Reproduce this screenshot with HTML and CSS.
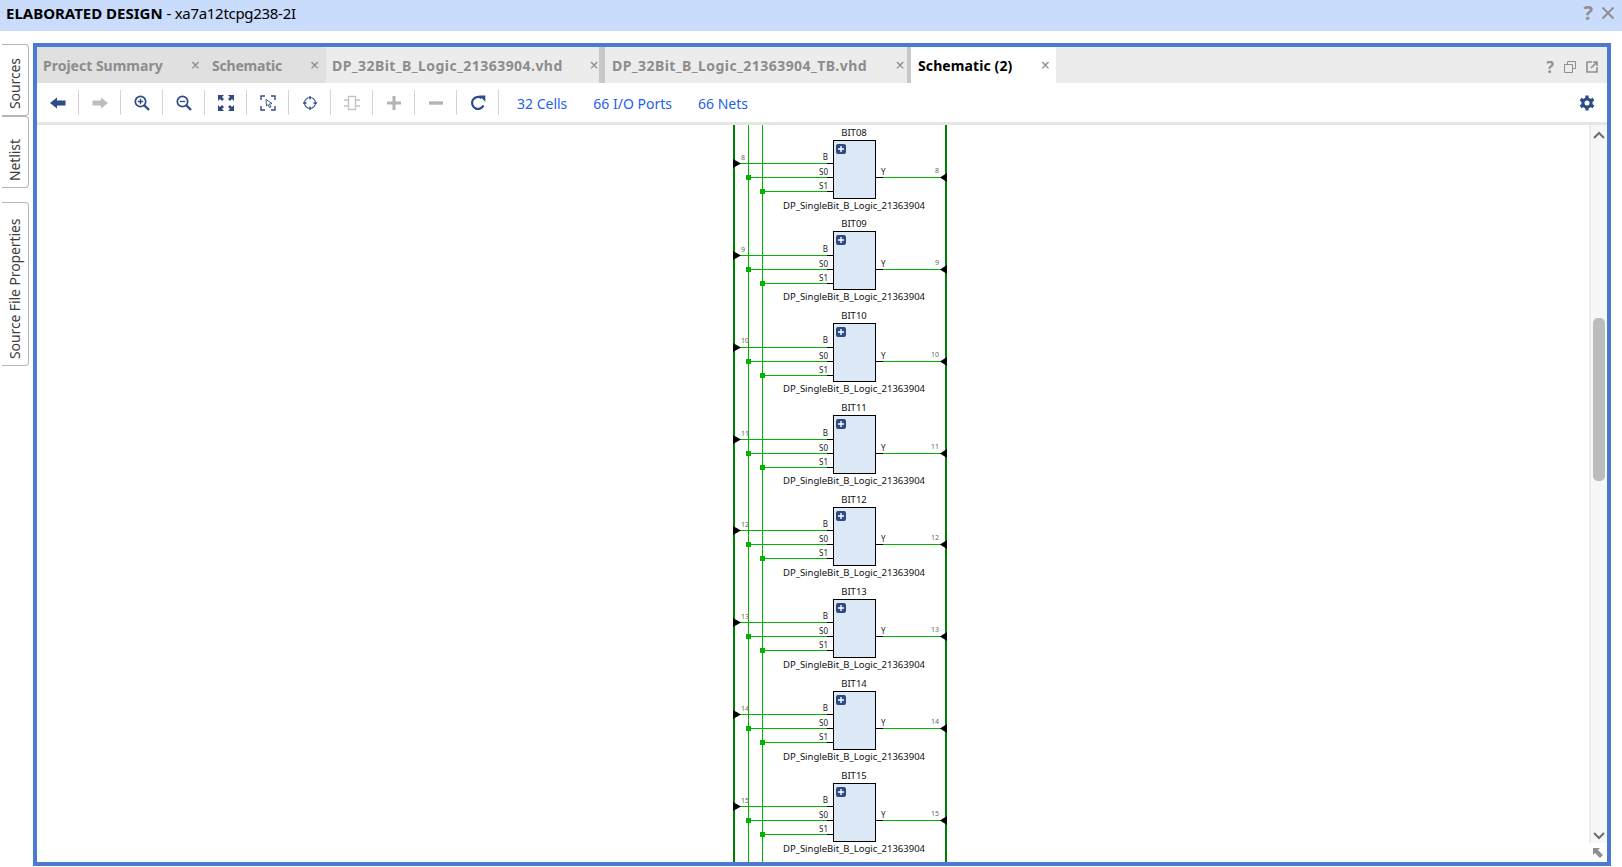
FILE: index.html
```html
<!DOCTYPE html>
<html lang="en">
<head>
<meta charset="utf-8">
<title>Elaborated Design</title>
<link rel="stylesheet" href="styles.css">
</head>
<body>
<svg class="defs" width="0" height="0" aria-hidden="true">
  <defs>
    <g id="cell">
      <rect x="1.5" y="1.5" width="42" height="58" fill="#dde8f7" stroke="#000" stroke-width="1"/>
      <rect x="4" y="5" width="10" height="10" rx="2" fill="#2f4b86"/>
      <path d="M9 7v6M6 10h6" stroke="#fff" stroke-width="1.4"/>
    </g>
    <g id="wires">
      <path d="M738 24.5H827M748 38.5H827M762 52.5H827M883 38.5H942" stroke="#00b400" stroke-width="1" fill="none"/>
      <path d="M827 24.5H841M827 38.5H841M827 52.5H841M868 38.5H883" stroke="#000" stroke-width="1" fill="none"/>
      <rect x="746" y="36" width="5" height="5" fill="#00b400"/>
      <rect x="760" y="50" width="5" height="5" fill="#00b400"/>
      <path d="M733 20l8 4.5-8 4.5z" fill="#000"/>
      <path d="M947 34l-7 4.5 7 4.5z" fill="#000"/>
    </g>
  </defs>
</svg>
<header class="titlebar">
  <div class="title"><b>ELABORATED DESIGN</b> <span class="part">- xa7a12tcpg238-2I</span></div>
  <div class="title-actions">
    <span class="title-q">?</span>
    <svg width="14" height="14" viewBox="0 0 14 14"><path d="M1.5 1.5l11 11M12.5 1.5l-11 11" stroke="#8f8f8f" stroke-width="1.8"/></svg>
  </div>
</header>
<div class="workspace">
  <nav class="sidetabs">
    <div class="sidetab tab-sources">Sources</div>
    <div class="sidetab tab-netlist">Netlist</div>
    <div class="sidetab tab-props">Source File Properties</div>
  </nav>
  <main class="panel">
    <div class="tabbar">
      <div class="tab dim t1"><span>Project Summary</span><i>×</i></div>
      <div class="tab dim t2"><span>Schematic</span><i>×</i></div>
      <div class="tab t3"><span>DP_32Bit_B_Logic_21363904.vhd</span><i>×</i></div>
      <div class="tab t4"><span>DP_32Bit_B_Logic_21363904_TB.vhd</span><i>×</i></div>
      <div class="tab active t5"><span>Schematic (2)</span><i>×</i></div>
      <div class="tab-actions">
        <span class="tab-q">?</span>
        <svg width="12" height="12" viewBox="0 0 12 12"><path d="M3.5 3.5V.5h8v7h-3M.5 3.5h8v8h-8z" fill="none" stroke="#8f8f8f"/></svg>
        <svg width="12" height="12" viewBox="0 0 12 12"><path d="M6 1H1v10h10V6" fill="none" stroke="#8f8f8f" stroke-width="1.6"/><path d="M5 7l5-5M7 1h4v4" fill="none" stroke="#8f8f8f" stroke-width="1.6"/></svg>
      </div>
    </div>
    <div class="toolbar">
      <button class="tool"><svg width="16" height="12" viewBox="0 0 16 12"><path d="M0 6l7-5.5V3.500h8.500v5H7v3z" fill="#2f4b86"/></svg></button>
      <button class="tool"><svg width="16" height="12" viewBox="0 0 16 12"><path d="M16 6L9 .5V3.500H.5v5H9v3z" fill="#bdbdbd"/></svg></button>
      <button class="tool"><svg width="16" height="16" viewBox="0 0 16 16"><circle cx="6.5" cy="6.5" r="5.2" fill="none" stroke="#2f4b86" stroke-width="1.7"/><path d="M10.5 10.5l4.5 4.5" stroke="#2f4b86" stroke-width="2.4"/><path d="M6.5 3.8v5.400M3.8 6.5h5.400" stroke="#2f4b86" stroke-width="1.3"/></svg></button>
      <button class="tool"><svg width="16" height="16" viewBox="0 0 16 16"><circle cx="6.5" cy="6.5" r="5.2" fill="none" stroke="#2f4b86" stroke-width="1.7"/><path d="M10.5 10.5l4.5 4.5" stroke="#2f4b86" stroke-width="2.4"/><path d="M3.8 6.5h5.400" stroke="#2f4b86" stroke-width="1.3"/></svg></button>
      <button class="tool"><svg width="16" height="16" viewBox="0 0 16 16"><path d="M0 0h6L4 2l2 2-2 2-2-2-2 2zM16 0v6l-2-2-2 2-2-2 2-2-2-2zM0 16v-6l2 2 2-2 2 2-2 2 2 2zM16 16h-6l2-2-2-2 2-2 2 2 2-2z" fill="#2f4b86"/></svg></button>
      <button class="tool"><svg width="16" height="16" viewBox="0 0 16 16"><path d="M5 1H1v4M11 1h4v4M5 15H1v-4M11 15h4v-4" fill="none" stroke="#2f4b86" stroke-width="1.4"/><path d="M6 4.500l6 4-2.500.5 1.500 3-1.500.5-1.300-3L6.500 11z" fill="#fff" stroke="#2f4b86" stroke-width=".9"/></svg></button>
      <button class="tool"><svg width="16" height="16" viewBox="0 0 16 16"><circle cx="8" cy="8" r="5.5" fill="none" stroke="#2f4b86" stroke-width="1.1"/><path d="M8 1v3.500M8 11.500V15M1 8h3.500M11.500 8H15" stroke="#2f4b86" stroke-width="1.3"/></svg></button>
      <button class="tool"><svg width="16" height="16" viewBox="0 0 16 16"><rect x="4.5" y="1.5" width="7" height="13" fill="none" stroke="#c4c4c4" stroke-width="1.4"/><path d="M0 5h4M0 11h4M12 5h4M12 11h4" stroke="#c4c4c4" stroke-width="1.6"/></svg></button>
      <button class="tool"><svg width="16" height="16" viewBox="0 0 16 16"><path d="M8 1v14M1 8h14" stroke="#b4b4b4" stroke-width="3"/></svg></button>
      <button class="tool"><svg width="16" height="16" viewBox="0 0 16 16"><path d="M1 8h14" stroke="#b4b4b4" stroke-width="3.4"/></svg></button>
      <button class="tool"><svg width="16" height="16" viewBox="0 0 16 16"><path d="M13.5 10.5A6 6 0 1 1 11.5 3" fill="none" stroke="#2f4b86" stroke-width="2.2"/><path d="M9 .5h6.300v6.300z" fill="#2f4b86"/></svg></button>
      <a class="stat first" href="#">32 Cells</a>
      <a class="stat" href="#">66 I/O Ports</a>
      <a class="stat" href="#">66 Nets</a>
      <svg class="gear" width="16" height="16" viewBox="0 0 16 16"><path d="M8 .5v15M1.500 4.250l13 7.500M1.500 11.750l13-7.500" stroke="#2f4b86" stroke-width="3.2"/><circle cx="8" cy="8" r="5.6" fill="#2f4b86"/><circle cx="8" cy="8" r="2.5" fill="#fff"/></svg>
    </div>
    <div class="rule"></div>
    <div class="canvas">
      <svg class="schematic" width="1552" height="737" viewBox="37 125 1552 737">
        <path d="M734 125V862M946 125V862" stroke="#008000" stroke-width="2" fill="none"/>
        <path d="M748.5 125V862M762.5 125V862" stroke="#00b400" stroke-width="1" fill="none"/>
        <g transform="translate(0,139)"><use href="#wires"/><use href="#cell" x="832"/><text class="name" x="854" y="-3">BIT08</text><text class="pin" x="828" y="21" text-anchor="end">B</text><text class="pin" x="828" y="36" text-anchor="end">S0</text><text class="pin" x="828" y="50" text-anchor="end">S1</text><text class="pin" x="881" y="36">Y</text><text class="num" x="741" y="21">8</text><text class="num" x="939" y="34" text-anchor="end">8</text><text class="name" x="854" y="70">DP_SingleBit_B_Logic_21363904</text></g>
        <g transform="translate(0,231)"><use href="#wires"/><use href="#cell" x="832" y="-1"/><text class="name" x="854" y="-4">BIT09</text><text class="pin" x="828" y="21" text-anchor="end">B</text><text class="pin" x="828" y="36" text-anchor="end">S0</text><text class="pin" x="828" y="50" text-anchor="end">S1</text><text class="pin" x="881" y="36">Y</text><text class="num" x="741" y="21">9</text><text class="num" x="939" y="34" text-anchor="end">9</text><text class="name" x="854" y="69">DP_SingleBit_B_Logic_21363904</text></g>
        <g transform="translate(0,323)"><use href="#wires"/><use href="#cell" x="832" y="-1"/><text class="name" x="854" y="-4">BIT10</text><text class="pin" x="828" y="20" text-anchor="end">B</text><text class="pin" x="828" y="36" text-anchor="end">S0</text><text class="pin" x="828" y="50" text-anchor="end">S1</text><text class="pin" x="881" y="36">Y</text><text class="num" x="741" y="20">10</text><text class="num" x="939" y="34" text-anchor="end">10</text><text class="name" x="854" y="69">DP_SingleBit_B_Logic_21363904</text></g>
        <g transform="translate(0,415)"><use href="#wires"/><use href="#cell" x="832" y="-1"/><text class="name" x="854" y="-4">BIT11</text><text class="pin" x="828" y="21" text-anchor="end">B</text><text class="pin" x="828" y="36" text-anchor="end">S0</text><text class="pin" x="828" y="50" text-anchor="end">S1</text><text class="pin" x="881" y="36">Y</text><text class="num" x="741" y="21">11</text><text class="num" x="939" y="34" text-anchor="end">11</text><text class="name" x="854" y="69">DP_SingleBit_B_Logic_21363904</text></g>
        <g transform="translate(0,506)"><use href="#wires"/><use href="#cell" x="832"/><text class="name" x="854" y="-3">BIT12</text><text class="pin" x="828" y="21" text-anchor="end">B</text><text class="pin" x="828" y="36" text-anchor="end">S0</text><text class="pin" x="828" y="50" text-anchor="end">S1</text><text class="pin" x="881" y="36">Y</text><text class="num" x="741" y="21">12</text><text class="num" x="939" y="34" text-anchor="end">12</text><text class="name" x="854" y="70">DP_SingleBit_B_Logic_21363904</text></g>
        <g transform="translate(0,598)"><use href="#wires"/><use href="#cell" x="832"/><text class="name" x="854" y="-3">BIT13</text><text class="pin" x="828" y="21" text-anchor="end">B</text><text class="pin" x="828" y="36" text-anchor="end">S0</text><text class="pin" x="828" y="50" text-anchor="end">S1</text><text class="pin" x="881" y="36">Y</text><text class="num" x="741" y="21">13</text><text class="num" x="939" y="34" text-anchor="end">13</text><text class="name" x="854" y="70">DP_SingleBit_B_Logic_21363904</text></g>
        <g transform="translate(0,690)"><use href="#wires"/><use href="#cell" x="832"/><text class="name" x="854" y="-3">BIT14</text><text class="pin" x="828" y="21" text-anchor="end">B</text><text class="pin" x="828" y="36" text-anchor="end">S0</text><text class="pin" x="828" y="50" text-anchor="end">S1</text><text class="pin" x="881" y="36">Y</text><text class="num" x="741" y="21">14</text><text class="num" x="939" y="34" text-anchor="end">14</text><text class="name" x="854" y="70">DP_SingleBit_B_Logic_21363904</text></g>
        <g transform="translate(0,782)"><use href="#wires"/><use href="#cell" x="832"/><text class="name" x="854" y="-3">BIT15</text><text class="pin" x="828" y="21" text-anchor="end">B</text><text class="pin" x="828" y="36" text-anchor="end">S0</text><text class="pin" x="828" y="50" text-anchor="end">S1</text><text class="pin" x="881" y="36">Y</text><text class="num" x="741" y="21">15</text><text class="num" x="939" y="34" text-anchor="end">15</text><text class="name" x="854" y="70">DP_SingleBit_B_Logic_21363904</text></g>
      </svg>
      <div class="scrollbar">
        <div class="sbar">
          <svg class="arrow" width="12" height="8" viewBox="0 0 12 8"><path d="M1 7l5-5 5 5" fill="none" stroke="#6e6e6e" stroke-width="2"/></svg>
          <div class="track"><div class="thumb"></div></div>
          <svg class="arrow" width="12" height="8" viewBox="0 0 12 8"><path d="M1 1l5 5 5-5" fill="none" stroke="#6e6e6e" stroke-width="2"/></svg>
        </div>
        <div class="corner"><svg width="12" height="12" viewBox="0 0 12 12"><path d="M1 1h7L6 3l5 5-3 3-5-5-2 2z" fill="#8f8f8f"/></svg></div>
      </div>
    </div>
  </main>
</div>
</body>
</html>
```
FILE: styles.css
```css
* { box-sizing: border-box; }
html, body { margin: 0; height: 100%; overflow: hidden; }
body { background: #fff; font-family: "Noto Sans", "Open Sans", sans-serif; display: flex; flex-direction: column; color: #000; }
.defs { position: absolute; }
.titlebar { height: 31px; flex: none; background: #c9dcfb; display: flex; align-items: center; justify-content: space-between; padding: 0 7px 5px 6px; }
.title { font-size: 15px; white-space: nowrap; }
.title b { font-weight: 700; }
.title .part { letter-spacing: -0.3px; }
.title-actions { display: flex; align-items: center; gap: 8px; }
.title-q { font-size: 20px; font-weight: 700; color: #8f8f8f; line-height: 18px; }
.workspace { flex: 1; display: flex; padding: 12px 11px 1px 2px; min-height: 0; }
.sidetabs { width: 31px; flex: none; display: flex; flex-direction: column; align-items: flex-start; padding-top: 1px; }
.sidetab { width: 27px; writing-mode: vertical-rl; transform: rotate(180deg); font-size: 14px; letter-spacing: -0.1px; color: #3c3c3c; border: 1px solid #b5b5b5; border-right: 0; border-radius: 4px 0 0 4px; background: #fff; text-align: left; line-height: 25px; padding-top: 6px; }
.tab-sources { height: 72px; }
.tab-netlist { height: 72px; }
.tab-props { height: 164px; margin-top: 14px; }
.panel { flex: 1; display: flex; flex-direction: column; border: 4px solid #4a7bd0; min-width: 0; }
.tabbar { height: 36px; flex: none; background: #ececec; display: flex; }
.tab { display: flex; align-items: center; justify-content: space-between; font-size: 14px; font-weight: 700; color: #8c8c8c; white-space: nowrap; }
.tab i { font-style: normal; font-weight: 400; font-size: 16px; color: #8c8c8c; }
.tab.dim { background: #e0e0e0; }
.t1 { width: 169px; padding: 0 6px 0 6px; }
.t2 { width: 120px; padding: 0 7px 0 6px; letter-spacing: -0.2px; }
.t3 { width: 279px; border-right: 6px solid #c8c8c8; padding: 0 0 0 6px; letter-spacing: 0.45px; }
.t4 { width: 306px; border-right: 4px solid #c8c8c8; padding: 0 2px 0 7px; letter-spacing: 0.45px; }
.tab.active { width: 145px; background: #fff; color: #000; padding: 0 6px 0 7px; letter-spacing: 0.1px; }
.tab-actions { margin-left: auto; display: flex; align-items: center; gap: 10px; padding: 4px 9px 0 0; }
.tab-q { font-size: 16px; font-weight: 700; color: #8f8f8f; }
.toolbar { height: 39px; flex: none; display: flex; align-items: center; background: #fff; }
.tool { width: 42px; height: 25px; padding: 0; background: none; border: 0; border-right: 1px solid #d4d4d4; display: flex; align-items: center; justify-content: center; }
.stat { font-size: 14px; color: #1f5ff0; text-decoration: none; margin: 2px 0 0 26px; }
.stat.first { margin-left: 18px; }
.gear { margin-left: auto; margin-right: 12px; }
.rule { height: 3px; flex: none; background: #e6e6e6; }
.canvas { flex: 1; display: flex; min-height: 0; background: #fff; overflow: hidden; }
.schematic { display: block; flex: none; }
.schematic text { font-family: "Noto Sans", "Open Sans", sans-serif; }
.name { font-size: 9.5px; fill: #111; text-anchor: middle; }
.pin { font-size: 8px; fill: #222; }
.num { font-size: 7px; fill: #666; }
.scrollbar { flex: 1; display: flex; flex-direction: column; min-width: 0; }
.sbar { flex: 1; display: flex; flex-direction: column; align-items: center; background: #f7f7f7; border-left: 2px solid #ececec; padding: 6px 0 3px; min-height: 0; }
.track { flex: 1; width: 100%; padding: 179px 2px 0 2px; }
.thumb { height: 163px; background: #bcbcbc; border-radius: 5px; }
.arrow { flex: none; }
.corner { height: 19px; flex: none; display: flex; align-items: center; justify-content: center; background: #fff; }
```
